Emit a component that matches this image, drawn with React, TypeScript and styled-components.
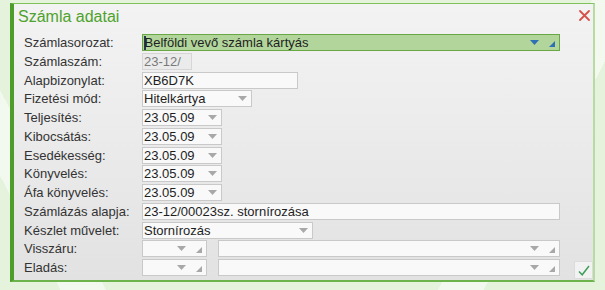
import React from 'react';
import styled, { createGlobalStyle } from 'styled-components';

const GlobalStyle = createGlobalStyle`
  html, body {
    margin: 0;
    padding: 0;
  }
  body {
    width: 605px;
    height: 290px;
    overflow: hidden;
    font-family: "Liberation Sans", Arial, sans-serif;
    background-color: #e5f2dc;
    background-image:
      linear-gradient(118deg, transparent 0 78%, rgba(255,255,255,0.55) 78% 84%, transparent 84%),
      linear-gradient(62deg, transparent 0 8%, rgba(255,255,255,0.5) 8% 14%, transparent 14%);
  }
`;

type FieldKind = 'text' | 'readonly' | 'select' | 'combo' | 'primary';

interface Row {
  label: string;
  fields: { kind: FieldKind; width: number; value?: string }[];
}

const rows: Row[] = [
  { label: 'Számlasorozat:', fields: [{ kind: 'primary', width: 418, value: 'Belföldi vevő számla kártyás' }] },
  { label: 'Számlaszám:', fields: [{ kind: 'readonly', width: 50, value: '23-12/' }] },
  { label: 'Alapbizonylat:', fields: [{ kind: 'text', width: 156, value: 'XB6D7K' }] },
  { label: 'Fizetési mód:', fields: [{ kind: 'select', width: 110, value: 'Hitelkártya' }] },
  { label: 'Teljesítés:', fields: [{ kind: 'select', width: 80, value: '23.05.09' }] },
  { label: 'Kibocsátás:', fields: [{ kind: 'select', width: 80, value: '23.05.09' }] },
  { label: 'Esedékesség:', fields: [{ kind: 'select', width: 80, value: '23.05.09' }] },
  { label: 'Könyvelés:', fields: [{ kind: 'select', width: 80, value: '23.05.09' }] },
  { label: 'Áfa könyvelés:', fields: [{ kind: 'select', width: 80, value: '23.05.09' }] },
  { label: 'Számlázás alapja:', fields: [{ kind: 'text', width: 418, value: '23-12/00023sz. stornírozása' }] },
  { label: 'Készlet művelet:', fields: [{ kind: 'select', width: 171, value: 'Stornírozás' }] },
  { label: 'Visszáru:', fields: [{ kind: 'combo', width: 65 }, { kind: 'combo', width: 342 }] },
  { label: 'Eladás:', fields: [{ kind: 'combo', width: 65 }, { kind: 'combo', width: 342 }] },
];

const Arrow = ({ color }: { color: string }) => (
  <svg width="9" height="5" viewBox="0 0 9 5">
    <path d="M0 0 H9 L4.5 5 Z" fill={color} />
  </svg>
);

const Grip = ({ color }: { color: string }) => (
  <svg width="6" height="6" viewBox="0 0 6 6">
    <path d="M6 0 V6 H0 Z" fill={color} />
  </svg>
);

const App: React.FC = () => {
  return (
    <>
      <GlobalStyle />
      <Page>
        <Panel>
          <Header>
            <Title>Számla adatai</Title>
            <CloseButton aria-label="close">
              <svg width="11" height="11" viewBox="0 0 11 11">
                <path d="M1 1 L10 10 M10 1 L1 10" stroke="#d8504a" strokeWidth="1.8" strokeLinecap="round" />
              </svg>
            </CloseButton>
          </Header>
          <Body>
            <Form>
              {rows.map(row => (
                <React.Fragment key={row.label}>
                  <Label>{row.label}</Label>
                  <Fields>
                    {row.fields.map((f, i) => (
                      <Field key={i} $kind={f.kind} style={{ width: f.width }}>
                        <Value $kind={f.kind}>
                          {f.kind === 'primary' && <Caret />}
                          {f.value}
                        </Value>
                        {(f.kind === 'select' || f.kind === 'combo' || f.kind === 'primary') && (
                          <Controls>
                            <Arrow color={f.kind === 'primary' ? '#2f6fb3' : '#a8a8a8'} />
                            {f.kind !== 'select' && (
                              <GripWrap>
                                <Grip color={f.kind === 'primary' ? '#2f6fb3' : '#a8a8a8'} />
                              </GripWrap>
                            )}
                          </Controls>
                        )}
                      </Field>
                    ))}
                  </Fields>
                </React.Fragment>
              ))}
            </Form>
            <ConfirmButton aria-label="ok">
              <svg width="12" height="11" viewBox="0 0 12 11">
                <path d="M1 6.5 L4.2 9.8 L11 1" fill="none" stroke="#3f9f5a" strokeWidth="1.5" />
              </svg>
            </ConfirmButton>
          </Body>
        </Panel>
      </Page>
    </>
  );
};

const Page = styled.div`
  padding: 3px 10px 0 10px;
`;

const Panel = styled.div`
  width: 579px;
  height: 276px;
  background: linear-gradient(to bottom, #f3f3f3 0%, #e9e9e9 60%, #e2e2e2 100%);
  border-top: 1px solid #7fc25c;
  border-left: 4px solid #4c9d2a;
  border-right: 2px solid #b7dba2;
  border-bottom: 2px solid #6db34b;
  display: flex;
  flex-direction: column;
`;

const Header = styled.div`
  display: flex;
  justify-content: space-between;
  align-items: flex-start;
  padding: 3px 3px 0 4px;
`;

const Title = styled.div`
  font-size: 16px;
  line-height: 20px;
  color: #4ea22c;
`;

const CloseButton = styled.div`
  width: 11px;
  height: 11px;
  margin-top: 3px;
  display: flex;
`;

const Body = styled.div`
  flex: 1;
  display: flex;
  align-items: flex-end;
  gap: 14px;
  padding: 7px 0 1px 10px;
`;

const Form = styled.div`
  display: grid;
  grid-template-columns: 118px 418px;
  grid-auto-rows: 17px;
  row-gap: 1.75px;
  align-self: flex-start;
`;

const Label = styled.div`
  font-size: 13px;
  line-height: 17px;
  color: #333;
  white-space: nowrap;
`;

const Fields = styled.div`
  display: flex;
  gap: 11px;
`;

const Field = styled.div<{ $kind: FieldKind }>`
  box-sizing: border-box;
  height: 17px;
  display: flex;
  align-items: center;
  border: 1px solid
    ${({ $kind }) => ($kind === 'primary' ? '#6aa845' : $kind === 'readonly' ? '#d6d6d6' : '#c9c9c9')};
  background: ${({ $kind }) =>
    $kind === 'primary' ? '#b2d59b' : $kind === 'readonly' ? '#ebebeb' : '#f9f9f9'};
  overflow: hidden;
`;

const Value = styled.span<{ $kind: FieldKind }>`
  flex: 1;
  display: flex;
  align-items: center;
  padding-left: 1px;
  font-size: 13px;
  line-height: 15px;
  white-space: nowrap;
  color: ${({ $kind }) => ($kind === 'readonly' ? '#7a7a7a' : '#1e1e1e')};
`;

const Caret = styled.span`
  display: inline-block;
  width: 1.5px;
  height: 14px;
  margin-right: -1px;
  background: #2a3550;
`;

const Controls = styled.div`
  display: flex;
  align-items: center;
  gap: 10px;
  padding-right: 4px;
  height: 100%;
`;

const GripWrap = styled.span`
  display: flex;
  align-self: flex-end;
  padding-bottom: 3px;
`;

const ConfirmButton = styled.div`
  box-sizing: border-box;
  width: 19px;
  height: 18px;
  display: flex;
  align-items: center;
  justify-content: center;
  background: #f2f2f2;
  border: 1px solid #dcdcdc;
`;

export default App;
